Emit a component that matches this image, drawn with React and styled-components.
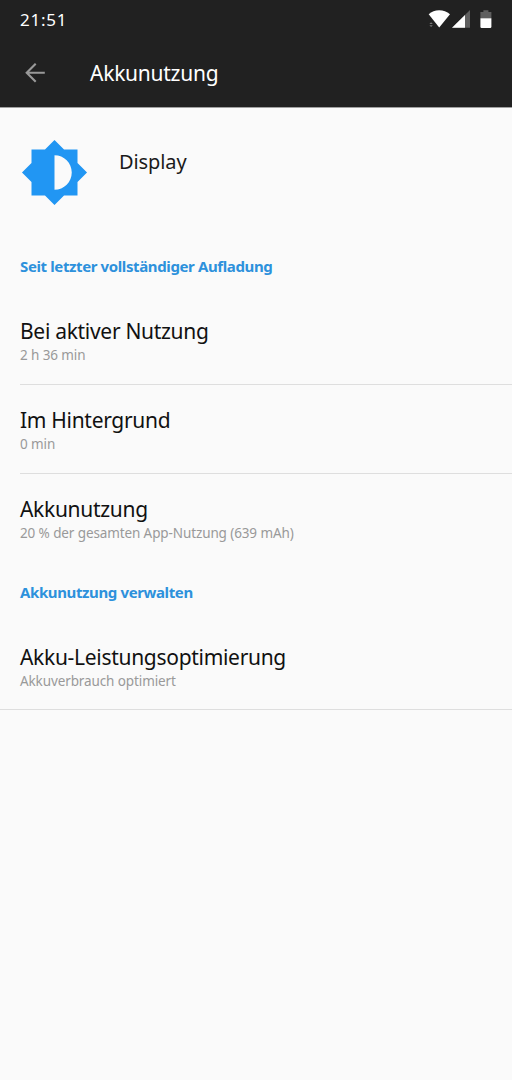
import styled, { createGlobalStyle } from 'styled-components';

export default function App() {
  return (
    <Screen>
      <GlobalStyle />
      <Header>
        <StatusBar>
          <Clock>21:51</Clock>
          <StatusIcons />
        </StatusBar>
        <Toolbar>
          <BackArrow />
          <Title>Akkunutzung</Title>
        </Toolbar>
      </Header>
      <AppInfo>
        <BrightnessIcon />
        <AppName>Display</AppName>
      </AppInfo>
      <Category>Seit letzter vollständiger Aufladung</Category>
      <Entry title="Bei aktiver Nutzung" summary="2 h 36 min" divider height={89} />
      <Entry title="Im Hintergrund" summary="0 min" divider height={89} />
      <Entry
        title="Akkunutzung"
        summary="20 % der gesamten App-Nutzung (639 mAh)"
        height={82}
      />
      <Category>Akkunutzung verwalten</Category>
      <Entry title="Akku-Leistungsoptimierung" summary="Akkuverbrauch optimiert" height={87} />
      <EndLine />
    </Screen>
  );
}

function Entry({ title, summary, divider, height }) {
  return (
    <Row $divider={divider} $height={height}>
      <RowTitle>{title}</RowTitle>
      <Summary>{summary}</Summary>
    </Row>
  );
}

function StatusIcons() {
  return (
    <svg width="66" height="22" viewBox="0 0 66 22">
      <path d="M0.7 4.3C3.7 1.7 7 0.2 11.2 0.2s7.5 1.5 10.8 4.1L11.2 17.6z" fill="#fff" />
      <path d="M1.4 14.1h3.4L3.1 12.2zM1.4 15.2h3.4l-1.7 1.9z" fill="#777" />
      <path d="M42 0v17.8H24z" fill="#5f5f5f" />
      <path d="M37 4.9v12.9H24z" fill="#fff" />
      <path d="M52.4 2h3V0.2h5V2h3v6.2h-11z" fill="#5f5f5f" />
      <path d="M52.4 8.2h11v8.6q0 1.2-1.2 1.2h-8.6q-1.2 0-1.2-1.2z" fill="#fff" />
    </svg>
  );
}

function BackArrow() {
  return (
    <svg width="20" height="20" viewBox="0 0 20 20" fill="none" stroke="#999" strokeWidth="2.1">
      <path d="M19.8 9.7H1.8M10.7 0.7L1.7 9.7l9 9" />
    </svg>
  );
}

function BrightnessIcon() {
  return (
    <svg width="69" height="69" viewBox="0 0 24 24" fill="#2196f3">
      <path d="M20 15.31L23.31 12 20 8.69V4h-4.69L12 .69 8.69 4H4v4.69L.69 12 4 15.31V20h4.69L12 23.31 15.31 20H20v-4.69zM12 18V6c3.31 0 6 2.69 6 6s-2.69 6-6 6z" />
    </svg>
  );
}

const GlobalStyle = createGlobalStyle`
  * {
    box-sizing: border-box;
  }

  body {
    margin: 0;
    background: #fafafa;
    font-family: 'Noto Sans', sans-serif;
  }

  h1, h2, h3, p {
    margin: 0;
    font-weight: 400;
  }
`;

const Screen = styled.main`
  display: flex;
  flex-direction: column;
  min-height: 1080px;
  background: #fafafa;
  white-space: nowrap;
`;

const Header = styled.header`
  height: 108px;
  border-bottom: 1px solid #a0a0a0;
  background: #212121;
  color: #fff;
`;

const StatusBar = styled.div`
  display: flex;
  justify-content: space-between;
  height: 39px;
  padding: 10px 18px 0 20px;
`;

const Clock = styled.span`
  font-size: 17px;
  line-height: 19px;
  letter-spacing: 0.75px;
`;

const Toolbar = styled.div`
  display: flex;
  align-items: center;
  gap: 45px;
  height: 68px;
  padding-left: 25px;
`;

const Title = styled.h1`
  font-size: 21px;
  line-height: 28px;
  letter-spacing: -0.25px;
`;

const AppInfo = styled.section`
  display: flex;
  gap: 30px;
  height: 122px;
  padding: 30px 20px 0;
`;

const AppName = styled.h2`
  padding-top: 10px;
  color: #1a1a1a;
  font-size: 20px;
  line-height: 28px;
  letter-spacing: -0.1px;
`;

const Category = styled.h2`
  height: 66px;
  padding: 26px 20px 0;
  color: #2d91dc;
  font-size: 15px;
  font-weight: 700;
  line-height: 20px;
  letter-spacing: -0.38px;
`;

const Row = styled.section`
  height: ${({ $height }) => $height}px;
  margin-left: 20px;
  padding-top: 21px;
  border-bottom: ${({ $divider }) => ($divider ? '1px solid #dedede' : 'none')};
`;

const RowTitle = styled.h3`
  color: #111;
  font-size: 21px;
  line-height: 28px;
  letter-spacing: -0.3px;
`;

const Summary = styled.p`
  color: #999;
  font-size: 13.5px;
  line-height: 20px;
  letter-spacing: -0.11px;
`;

const EndLine = styled.div`
  height: 1px;
  background: #dedede;
`;
